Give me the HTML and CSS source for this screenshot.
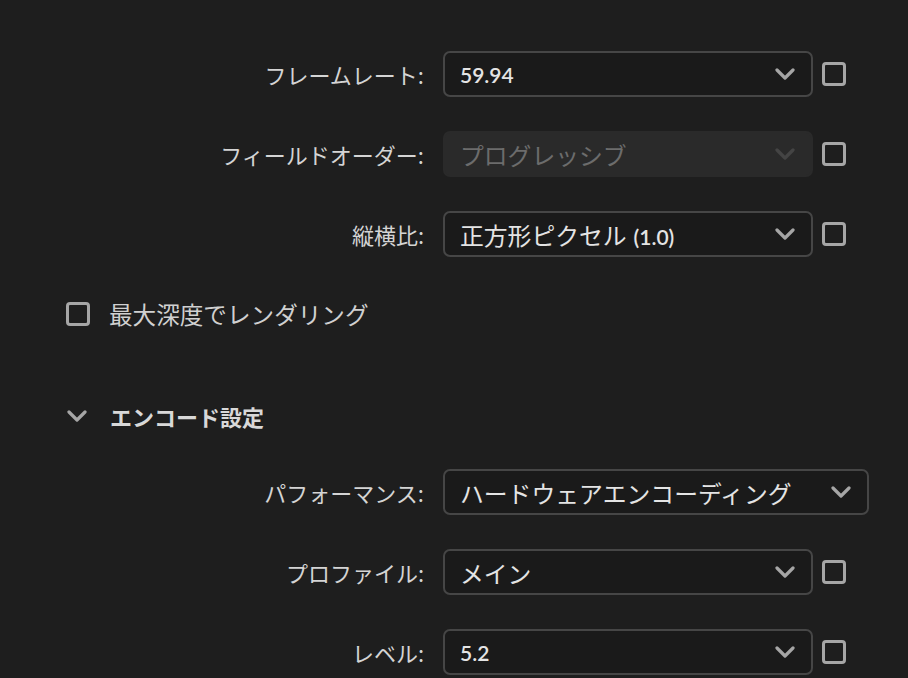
FILE: index.html
```html
<!DOCTYPE html>
<html lang="ja">
<head>
<meta charset="utf-8">
<link rel="stylesheet" href="styles.css">
</head>
<body>
<div class="panel">
  <div class="row">
    <div class="label">フレームレート:</div>
    <div class="select"><span class="value num">59.94</span><svg class="chev" viewBox="0 0 20 12"><path d="M2 2 L10 10 L18 2"/></svg></div>
    <div class="check"></div>
  </div>
  <div class="row">
    <div class="label">フィールドオーダー:</div>
    <div class="select disabled"><span class="value">プログレッシブ</span><svg class="chev" viewBox="0 0 20 12"><path d="M2 2 L10 10 L18 2"/></svg></div>
    <div class="check"></div>
  </div>
  <div class="row">
    <div class="label">縦横比:</div>
    <div class="select"><span class="value">正方形ピクセル<span class="num paren">(1.0)</span></span><svg class="chev" viewBox="0 0 20 12"><path d="M2 2 L10 10 L18 2"/></svg></div>
    <div class="check"></div>
  </div>
  <div class="row option">
    <div class="check"></div>
    <span class="option-text">最大深度でレンダリング</span>
  </div>
  <div class="row section">
    <svg class="chev section-chev" viewBox="0 0 20 12"><path d="M2 2 L10 10 L18 2"/></svg>
    <span class="section-title">エンコード設定</span>
  </div>
  <div class="row perf">
    <div class="label">パフォーマンス:</div>
    <div class="select wide"><span class="value">ハードウェアエンコーディング</span><svg class="chev" viewBox="0 0 20 12"><path d="M2 2 L10 10 L18 2"/></svg></div>
  </div>
  <div class="row">
    <div class="label">プロファイル:</div>
    <div class="select"><span class="value">メイン</span><svg class="chev" viewBox="0 0 20 12"><path d="M2 2 L10 10 L18 2"/></svg></div>
    <div class="check"></div>
  </div>
  <div class="row">
    <div class="label">レベル:</div>
    <div class="select"><span class="value num">5.2</span><svg class="chev" viewBox="0 0 20 12"><path d="M2 2 L10 10 L18 2"/></svg></div>
    <div class="check"></div>
  </div>
</div>
</body>
</html>
```
FILE: styles.css
```css
html, body {
  margin: 0;
  padding: 0;
  background: #1e1e1e;
  height: 100%;
  overflow: hidden;
}
body {
  font-family: "Noto Sans CJK JP", "Noto Sans", sans-serif;
  color: #d6d6d6;
  font-size: 20px;
}
.panel {
  padding-top: 51px;
  display: flex;
  flex-direction: column;
  gap: 34px;
}
.row {
  height: 46px;
  display: flex;
  align-items: center;
}
.label {
  width: 424px;
  text-align: right;
  margin-right: 19px;
  white-space: nowrap;
  color: #d4d4d4;
  font-size: 22px;
}
.select {
  box-sizing: border-box;
  width: 370px;
  height: 46px;
  border: 2px solid #464646;
  border-radius: 7px;
  background: #1a1a1a;
  display: flex;
  align-items: center;
  justify-content: space-between;
  padding: 0 16px 0 15px;
  color: #e4e4e4;
  font-size: 23.8px;
}
.select.wide {
  width: 426px;
}
.select.disabled {
  border-color: #2a2a2a;
  background: #2a2a2a;
  color: #6c6c6c;
}
.select.disabled .chev path {
  stroke: #444444;
}
.value {
  white-space: nowrap;
}
.num {
  font-family: "Lato", "Noto Sans", sans-serif;
  font-weight: 600;
  font-size: 21px;
}
.paren {
  margin-left: 7px;
}
.chev {
  width: 20px;
  height: 12px;
  flex: none;
}
.chev path {
  fill: none;
  stroke: #a6a6a6;
  stroke-width: 3.2;
  stroke-linecap: round;
  stroke-linejoin: round;
}
.check {
  box-sizing: border-box;
  width: 24px;
  height: 24px;
  border: 3px solid #a6a6a6;
  border-radius: 4px;
  margin-left: 9px;
  flex: none;
}
.option .check {
  margin-left: 66px;
  margin-right: 19px;
}
.option-text {
  color: #d0d0d0;
  font-size: 23.6px;
}
.section {
  margin-top: 22px;
}
.section-chev {
  margin-left: 66px;
  width: 22px;
  margin-right: 22px;
}
.section-title {
  font-weight: 700;
  color: #d8d8d8;
  font-size: 22px;
}
.perf {
  margin-top: -4px;
}
```
